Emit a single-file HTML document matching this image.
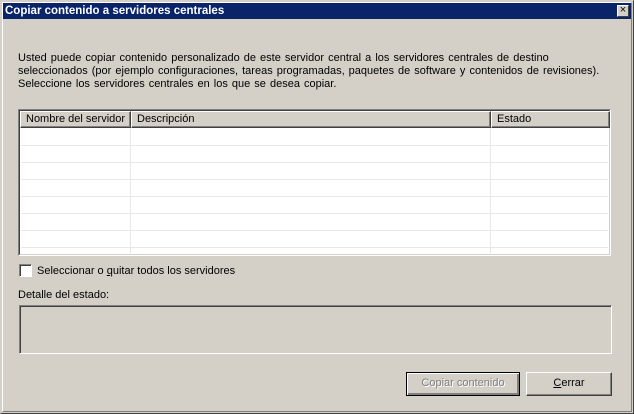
<!DOCTYPE html>
<html><head><style>
*{margin:0;padding:0;box-sizing:border-box}
body{width:634px;height:414px;background:#d4d0c8;font-family:Tahoma,"Liberation Sans",sans-serif;font-size:11px;color:#000;position:relative;overflow:hidden}
.outer{position:absolute;left:0;top:0;width:634px;height:414px;border:1px solid;border-color:#d4d0c8 #404040 #404040 #d4d0c8}
.inner{position:absolute;left:1px;top:1px;right:1px;bottom:1px;border:1px solid;border-color:#fff #808080 #808080 #fff}
.title{position:absolute;left:3px;top:3px;width:628px;height:16px;background:#0a246a;color:#fff;font-weight:bold;font-size:11.5px;line-height:17px;padding-left:2px}
.x{position:absolute;right:2px;top:2px;width:12px;height:12px;background:#d4d0c8;border:1px solid;border-color:#fff #404040 #404040 #fff;color:#000;font-size:11px;line-height:9px;text-align:center;font-weight:normal}
.a{position:absolute;white-space:nowrap}
.table{position:absolute;left:18px;top:109px;width:593px;height:147px;background:#fff;border:1px solid;border-color:#808080 #fff #fff #808080;overflow:hidden}
.table:before{content:"";position:absolute;left:0;top:0;right:0;bottom:0;border:1px solid;border-color:#404040 #d4d0c8 #d4d0c8 #404040}
.hd{position:absolute;top:1px;height:17px;background:#d4d0c8;border:1px solid;border-color:#fff #404040 #404040 #fff;box-shadow:inset -1px -1px #808080;padding-left:5px;line-height:15px}
.rl{position:absolute;left:2px;right:2px;height:1px;background:#e8e8e8}
.cl{position:absolute;top:18px;bottom:0;width:1px;background:#e8e8e8}
.btn{position:absolute;height:24px;text-align:center;line-height:20px;border:1px solid;border-color:#fff #404040 #404040 #fff;box-shadow:inset -1px -1px #808080}
</style></head><body>
<div class="outer"><div class="inner"></div></div>
<div class="title">Copiar contenido a servidores centrales<div class="x">×</div></div>
<div class="a" style="left:18px;top:52px;line-height:13px;word-spacing:1px">Usted puede copiar contenido personalizado de este servidor central a los servidores centrales de destino<br>seleccionados (por ejemplo configuraciones, tareas programadas, paquetes de software y contenidos de revisiones).<br>Seleccione los servidores centrales en los que se desea copiar.</div>
<div class="table">
<div class="hd" style="left:1px;width:111px">Nombre del servidor</div>
<div class="hd" style="left:112px;width:360px">Descripción</div>
<div class="hd" style="left:472px;width:119px">Estado</div>
<div class="cl" style="left:111px"></div><div class="cl" style="left:471px"></div>
<div class="rl" style="top:35px"></div><div class="rl" style="top:52px"></div><div class="rl" style="top:69px"></div><div class="rl" style="top:86px"></div><div class="rl" style="top:103px"></div><div class="rl" style="top:120px"></div><div class="rl" style="top:137px"></div>
</div>
<div style="position:absolute;left:19px;top:264px;width:13px;height:13px;background:#fff;border:1px solid;border-color:#808080 #fff #fff #808080;box-shadow:inset 1px 1px #404040"></div>
<div class="a" style="left:37px;top:265px">Seleccionar o <u>q</u>uitar todos los servidores</div>
<div class="a" style="left:18px;top:289px">Detalle del estado:</div>
<div style="position:absolute;left:19px;top:305px;width:593px;height:49px;border:1px solid;border-color:#808080 #fff #fff #808080;box-shadow:inset 1px 1px #404040"></div>
<div class="btn" style="left:406px;top:372px;width:114px;border:1px solid #000;box-shadow:inset 1px 1px #fff,inset -2px -2px #808080;color:#808080;text-shadow:1px 1px #fff">Copiar contenido</div>
<div class="btn" style="left:526px;top:372px;width:86px"><u>C</u>errar</div>
</body></html>
